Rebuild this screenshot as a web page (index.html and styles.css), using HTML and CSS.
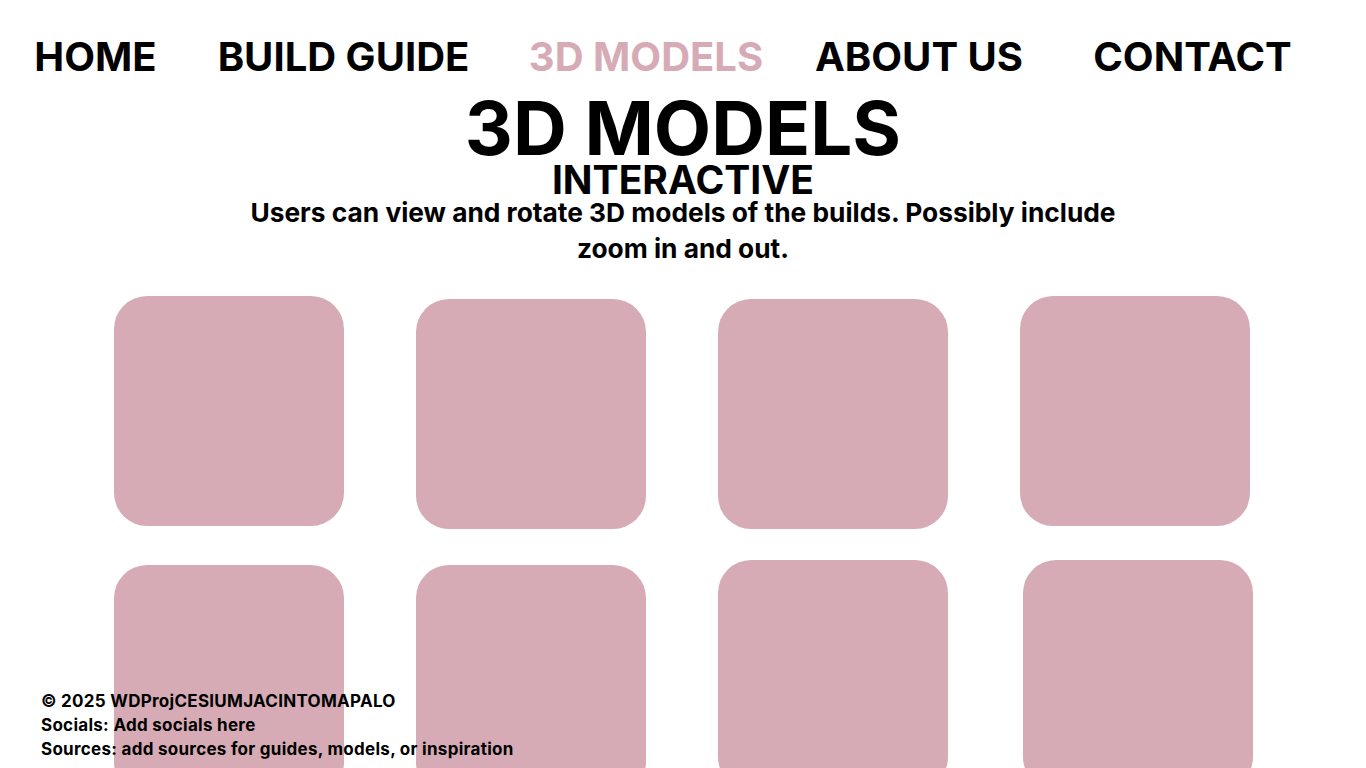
FILE: index.html
```html
<!DOCTYPE html>
<html lang="en">
<head>
<meta charset="utf-8">
<title>3D Models</title>
<link rel="stylesheet" href="styles.css">
</head>
<body>
<nav class="nav">
  <a class="nav-link" href="#">HOME</a>
  <a class="nav-link" href="#">BUILD GUIDE</a>
  <a class="nav-link active" href="#">3D MODELS</a>
  <a class="nav-link" href="#">ABOUT US</a>
  <a class="nav-link" href="#">CONTACT</a>
</nav>
<header class="hero">
  <h1 class="title">3D MODELS</h1>
  <h2 class="subtitle">INTERACTIVE</h2>
  <p class="desc">Users can view and rotate 3D models of the builds. Possibly include zoom in and out.</p>
</header>
<main class="grid">
  <div class="card"></div>
  <div class="card down"></div>
  <div class="card down"></div>
  <div class="card"></div>
  <div class="card"></div>
  <div class="card"></div>
  <div class="card up"></div>
  <div class="card up right"></div>
</main>
<footer class="footer">
  <p>© 2025 WDProjCESIUMJACINTOMAPALO</p>
  <p>Socials: Add socials here</p>
  <p>Sources: add sources for guides, models, or inspiration</p>
</footer>
</body>
</html>
```
FILE: styles.css
```css
html, body {
  margin: 0;
  padding: 0;
  background: #ffffff;
  color: #000000;
  font-family: Inter, "Liberation Sans", sans-serif;
  font-weight: 700;
}
body {
  position: relative;
  height: 768px;
  overflow: hidden;
}
.nav {
  display: grid;
  grid-template-columns: 191px 305px 300px 246px 301px;
  justify-items: center;
  align-items: center;
  padding-top: 37px;
}
.nav-link {
  font-size: 40px;
  line-height: 40px;
  color: #000;
  text-decoration: none;
  white-space: nowrap;
}
.nav-link.active {
  color: #d6abb5;
}
.hero {
  display: flex;
  flex-direction: column;
  align-items: center;
  text-align: center;
}
.title {
  margin: 18px 0 0;
  font-size: 74.5px;
  line-height: 66px;
  font-weight: 700;
}
.subtitle {
  margin: 1px 0 0;
  font-size: 39px;
  line-height: 36px;
  font-weight: 700;
}
.desc {
  margin: -3px 0 0;
  width: 900px;
  font-size: 26.3px;
  line-height: 36px;
}
.grid {
  display: grid;
  grid-template-columns: repeat(4, 230px);
  column-gap: 72px;
  row-gap: 36px;
  justify-content: start;
  padding-left: 114px;
  margin-top: 29px;
}
.card {
  width: 230px;
  height: 230px;
  border-radius: 33px;
  background: #d6abb5;
}
.card.down { margin-top: 3px; }
.card.up { margin-top: -5px; }
.card.right { margin-left: 3px; }
.footer {
  position: absolute;
  left: 41px;
  bottom: 7px;
  font-size: 17px;
  letter-spacing: 0.28px;
  line-height: 24px;
}
.footer p {
  margin: 0;
}
```
